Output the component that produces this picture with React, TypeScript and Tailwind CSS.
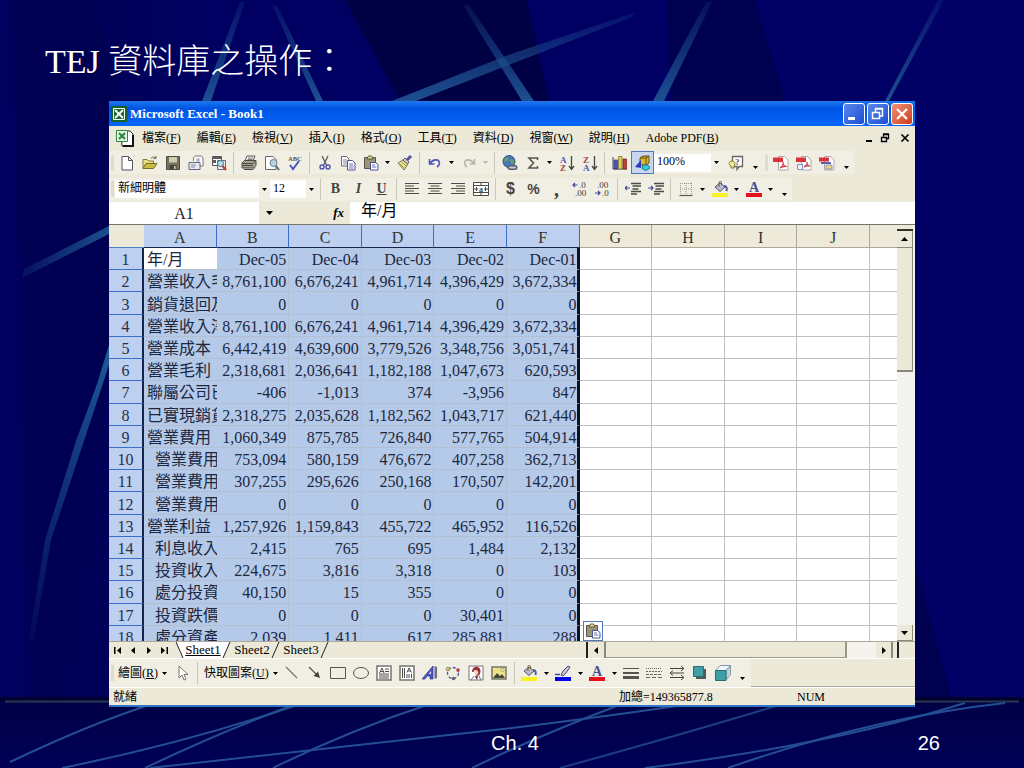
import React from 'react';

type Row = { label: string; indent?: boolean; values: string[] };

const COLUMNS = ['A', 'B', 'C', 'D', 'E', 'F', 'G', 'H', 'I', 'J'];
const SELECTED = 6;

const ROWS: Row[] = [
  { label: '年/月', values: ['Dec-05', 'Dec-04', 'Dec-03', 'Dec-02', 'Dec-01'] },
  { label: '營業收入毛', values: ['8,761,100', '6,676,241', '4,961,714', '4,396,429', '3,672,334'] },
  { label: '銷貨退回及', values: ['0', '0', '0', '0', '0'] },
  { label: '營業收入淨', values: ['8,761,100', '6,676,241', '4,961,714', '4,396,429', '3,672,334'] },
  { label: '營業成本', values: ['6,442,419', '4,639,600', '3,779,526', '3,348,756', '3,051,741'] },
  { label: '營業毛利', values: ['2,318,681', '2,036,641', '1,182,188', '1,047,673', '620,593'] },
  { label: '聯屬公司已', values: ['-406', '-1,013', '374', '-3,956', '847'] },
  { label: '已實現銷貨', values: ['2,318,275', '2,035,628', '1,182,562', '1,043,717', '621,440'] },
  { label: '營業費用', values: ['1,060,349', '875,785', '726,840', '577,765', '504,914'] },
  { label: '營業費用', indent: true, values: ['753,094', '580,159', '476,672', '407,258', '362,713'] },
  { label: '營業費用', indent: true, values: ['307,255', '295,626', '250,168', '170,507', '142,201'] },
  { label: '營業費用', indent: true, values: ['0', '0', '0', '0', '0'] },
  { label: '營業利益', values: ['1,257,926', '1,159,843', '455,722', '465,952', '116,526'] },
  { label: '利息收入', indent: true, values: ['2,415', '765', '695', '1,484', '2,132'] },
  { label: '投資收入', indent: true, values: ['224,675', '3,816', '3,318', '0', '103'] },
  { label: '處分投資', indent: true, values: ['40,150', '15', '355', '0', '0'] },
  { label: '投資跌價', indent: true, values: ['0', '0', '0', '30,401', '0'] },
  { label: '處分資產', indent: true, values: ['2,039', '1,411', '617', '285,881', '288'] },
];

const MENUS = [
  ['檔案', 'F'],
  ['編輯', 'E'],
  ['檢視', 'V'],
  ['插入', 'I'],
  ['格式', 'O'],
  ['工具', 'T'],
  ['資料', 'D'],
  ['視窗', 'W'],
  ['說明', 'H'],
  ['Adobe PDF', 'B'],
];

// 16x16 drawings for the toolbars
const ICONS: Record<string, React.ReactNode> = {
  new: <path d="M3 1.500h6.500l4 4v9.500H3z M9.500 1.500v4h4" fill="#fff" stroke="#55555c" />,
  open: (
    <>
      <path d="M1 13.500V4.500h4l1.500 1.500h5v3" fill="#e9df86" stroke="#86793a" />
      <path d="M1 13.500l3-5h11l-3.500 5z" fill="#c9bb45" stroke="#7a6d28" />
      <path d="M9 3.500c1.500-2 3.500-2 5-.5m0-2v2.500h-2.500" fill="none" stroke="#6b6b5a" />
    </>
  ),
  save: (
    <>
      <path d="M1.500 1.500h13v13h-13z" fill="#77745a" stroke="#4e4c3e" />
      <path d="M4 2h8v5.500H4z" fill="#cfccb4" />
      <path d="M4.500 10h7v4.500h-7z" fill="#45433a" />
      <path d="M9 11h1.500v3H9z" fill="#dddac8" />
    </>
  ),
  permission: (
    <>
      <path d="M5.500 6V2.500l2-1.500h6l1.500 2v8h-3" fill="#fff" stroke="#77777f" />
      <path d="M1 7.500h11v7H1z" fill="#e9e9f2" stroke="#66667a" />
      <path d="M3 10h5M3 12h4" stroke="#8484a8" />
      <circle cx="10" cy="5" r="2" fill="#b5b5cf" />
    </>
  ),
  search: (
    <>
      <path d="M1.500 1.500h9v9h-9z" fill="#fff" stroke="#555" />
      <path d="M1 2h9v2H1z M1 5h4v3H1z" fill="#5f5a62" />
      <path d="M6.500 5.500h8v9h-8z" fill="#ece9f5" stroke="#6a6a80" />
      <circle cx="9.500" cy="8.500" r="3" fill="#b4e0ea" stroke="#3c6d86" />
      <path d="M11.500 11l3.500 4" stroke="#c0392b" strokeWidth="2" />
    </>
  ),
  print: (
    <>
      <path d="M4 6l2-5h8l-2 5z" fill="#fff" stroke="#55554d" />
      <path d="M7 3h5M6.500 4.500h5" stroke="#777" />
      <path d="M1 8l2.500-2.500h11.500v5L12.500 13H1z" fill="#a5a391" stroke="#48473e" />
      <path d="M1.500 8.500H12l2.500-2.500M2 10.500h10M3 14.500h9l2-2" fill="none" stroke="#48473e" />
    </>
  ),
  preview: (
    <>
      <path d="M1.500 1.500h7.500l3 3v10H1.500z" fill="#fff" stroke="#66666d" />
      <circle cx="9.500" cy="8" r="3.500" fill="#b9d4dd" stroke="#6c7f88" />
      <path d="M12 11l3 4" stroke="#5c6b80" strokeWidth="2" />
    </>
  ),
  spell: (
    <>
      <text x="1" y="6" fontSize="6.500" fontWeight="700" fill="#55555c">ABC</text>
      <path d="M3 10l3 4 6-8" fill="none" stroke="#4e55b8" strokeWidth="2" />
    </>
  ),
  cut: (
    <>
      <path d="M5 1l4.500 9M11 1L6.500 10" stroke="#54545e" fill="none" strokeWidth="1.200" />
      <circle cx="5" cy="12" r="2" fill="none" stroke="#4a52b0" strokeWidth="1.400" />
      <circle cx="11" cy="12" r="2" fill="none" stroke="#4a52b0" strokeWidth="1.400" />
    </>
  ),
  copy: (
    <>
      <path d="M1.500 1.500h5l2.500 2.500v7H1.500z" fill="#fff" stroke="#66667a" />
      <path d="M3 5h4M3 7h4M3 9h4" stroke="#8484ab" />
      <path d="M7.500 5.500h5l2.500 2.500v7H7.500z" fill="#fff" stroke="#4e5290" />
      <path d="M9 9h4M9 11h4.500M9 13h4.500" stroke="#6a6eb4" />
    </>
  ),
  paste: (
    <>
      <path d="M1.500 2.500h11v11h-11z" fill="#9a9578" stroke="#57544a" />
      <path d="M4.500 4V2.500l1-1.500h3l1 1.500V4z" fill="#e7dc7a" stroke="#55534a" />
      <path d="M7.500 7.500h5l2.500 2v5.500H7.500z" fill="#fff" stroke="#4e5290" />
      <path d="M9 10h3M9 12h4.500" stroke="#6a6eb4" />
    </>
  ),
  painter: (
    <>
      <path d="M1 8l5-3 5 4-4 6z" fill="#e8e48c" stroke="#77744a" />
      <path d="M3 9l4 4M5 7l4 4" stroke="#9a974f" />
      <path d="M6 5l2-2 4 4-1.500 2z" fill="#c9c9d2" stroke="#65656e" />
      <path d="M10 5l4-4" stroke="#55559a" strokeWidth="3" />
    </>
  ),
  undo: <path d="M2.500 4v5h5M3 8.500C6 4 12 3.500 12.500 8c0 2-1 3-2.500 4" fill="none" stroke="#4e55b8" strokeWidth="1.600" />,
  redo: <path d="M13.500 4v5h-5M13 8.500C10 4 4 3.500 3.500 8c0 2 1 3 2.500 4" fill="none" stroke="#bab8ac" strokeWidth="1.600" />,
  link: (
    <>
      <circle cx="7" cy="6.500" r="6" fill="#4677b8" stroke="#344f86" />
      <path d="M3 3c3-2 4 0 3 2s-3 2-4 1zM8 5c3-1 4 0 4 2s-3 3-3 1z" fill="#63a45c" />
      <path d="M8 12.500h5" stroke="#55606e" strokeWidth="5" strokeLinecap="round" />
      <path d="M8 12.500h5" stroke="#c4c8d0" strokeWidth="2" strokeLinecap="round" />
    </>
  ),
  sum: <path d="M12.500 5V3H4l4.500 5L4 13h8.500v-2" fill="none" stroke="#55554f" strokeWidth="1.600" />,
  sortAsc: (
    <>
      <text x="1" y="7.500" fontSize="9" fontWeight="700" fill="#4e55b8">A</text>
      <text x="1" y="15.500" fontSize="9" fontWeight="700" fill="#a8423f">Z</text>
      <path d="M12.500 1v13M10 11l2.500 3.500L15 11" fill="none" stroke="#484842" strokeWidth="1.300" />
    </>
  ),
  sortDesc: (
    <>
      <text x="1" y="7.500" fontSize="9" fontWeight="700" fill="#a8423f">Z</text>
      <text x="1" y="15.500" fontSize="9" fontWeight="700" fill="#4e55b8">A</text>
      <path d="M12.500 1v13M10 11l2.500 3.500L15 11" fill="none" stroke="#484842" strokeWidth="1.300" />
    </>
  ),
  chart: (
    <>
      <path d="M1 2v12h14" fill="none" stroke="#44443e" />
      <path d="M2 5h3.500v9H2z" fill="#4e55c4" stroke="#2d3274" strokeWidth=".7" />
      <path d="M6.500 1.500H10V14H6.500z" fill="#e9d33e" stroke="#736518" strokeWidth=".7" />
      <path d="M11 4h3.500v10H11z" fill="#c63a35" stroke="#6e1f1c" strokeWidth=".7" />
    </>
  ),
  drawing: (
    <>
      <path d="M5 3l3-2h6v7l-3 2H5z" fill="#d9b92c" stroke="#5e5112" />
      <path d="M5 3h6v7M11 3l3-2" fill="none" stroke="#5e5112" />
      <path d="M0 12L6 5v8z" fill="#2c3bbd" />
      <path d="M8 10h5l2 3-4 2.500-4-2z" fill="#35c9dd" stroke="#1c7d90" />
    </>
  ),
  help: (
    <>
      <path d="M4.500 1.500h10v10H11l-2 3v-3H4.500z" fill="#fff" stroke="#66665e" strokeWidth="1.300" />
      <text x="7" y="9.500" fontSize="9" fontWeight="700" fill="#55554f">?</text>
      <path d="M4 6c3 0 4 3 2 5v2H3v-2C0 9 1 6 4 6z" fill="#ecec94" stroke="#77773c" />
    </>
  ),
  pdf: (
    <>
      <path d="M5.500 1.500h6l3.500 3.500v10H5.500z" fill="#fff" stroke="#a9a9a9" />
      <path d="M0 2.500h10v4.500H0z" fill="#d8333b" />
      <path d="M7 13c3-2 3.500-5 3-6 0 3 2 4.500 4 4.500-3-.5-5 0-7 1.500z" fill="none" stroke="#d8434b" strokeWidth="1.200" />
    </>
  ),
  pdfMail: (
    <>
      <path d="M5.500 1.500h6l3.500 3.500v10H5.500z" fill="#fff" stroke="#a9a9a9" />
      <path d="M0 2.500h10v4.500H0z" fill="#d8333b" />
      <path d="M8 12c3-2 3.500-4 3-5 0 2 1 4 3 4-3 0-4 0-6 1z" fill="none" stroke="#d8434b" strokeWidth="1.200" />
      <path d="M1.500 9.500h5v5h-5z" fill="#eef2fb" stroke="#7a93c8" />
    </>
  ),
  pdfReview: (
    <>
      <path d="M5.500 1.500h6l3.500 3.500v10H5.500z" fill="#fff" stroke="#a9a9a9" />
      <path d="M0 2.500h10v4H0z" fill="#d8333b" />
      <path d="M2 7h10v2H2z" fill="#5a5fb0" />
      <path d="M7 10h6v4H7z" fill="#efd97c" stroke="#8390b8" />
    </>
  ),
  alignLeft: <path d="M1 2.500h14M1 5h9M1 7.500h14M1 10h9M1 12.500h14" stroke="#4c4c46" strokeWidth="1.200" />,
  alignCenter: <path d="M1 2.500h14M3.500 5h9M1 7.500h14M3.500 10h9M1 12.500h14" stroke="#4c4c46" strokeWidth="1.200" />,
  alignRight: <path d="M1 2.500h14M6 5h9M1 7.500h14M6 10h9M1 12.500h14" stroke="#4c4c46" strokeWidth="1.200" />,
  merge: (
    <>
      <path d="M.5 1.500h15v13H.5zM.5 4.500h15M.5 11.500h15M8 1.500v3M8 11.500v3" fill="#fff" stroke="#4c4c46" />
      <path d="M1 8h4M15 8h-4M3.500 6v4M12.500 6v4" stroke="#4c4c46" />
      <text x="6" y="10.500" fontSize="8" fontWeight="700" fill="#4c4c46">a</text>
    </>
  ),
  incDecimal: (
    <>
      <path d="M5.500 4H1M3 2L1 4l2 2" fill="none" stroke="#4048a0" strokeWidth="1.200" />
      <text x="7" y="7" fontSize="9" fill="#3e3e3a">.0</text>
      <text x="3" y="15" fontSize="9" fill="#3e3e3a">.00</text>
    </>
  ),
  decDecimal: (
    <>
      <text x="2" y="7" fontSize="9" fill="#3e3e3a">.00</text>
      <path d="M0 12h5M3 10l2 2-2 2" fill="none" stroke="#4048a0" strokeWidth="1.200" />
      <text x="7" y="15" fontSize="9" fill="#3e3e3a">.0</text>
    </>
  ),
  outdent: (
    <>
      <path d="M6 2.500h10M7.500 5h8.500M7.500 8h6M6 10.500h10M6 13h6" stroke="#4c4c46" strokeWidth="1.300" />
      <path d="M5 7H0M2 5L0 7l2 2" fill="none" stroke="#4048a0" strokeWidth="1.200" />
    </>
  ),
  indent: (
    <>
      <path d="M6 2.500h10M7.500 5h8.500M7.500 8h6M6 10.500h10M6 13h6" stroke="#4c4c46" strokeWidth="1.300" />
      <path d="M0 7h5M3 5l2 2-2 2" fill="none" stroke="#4048a0" strokeWidth="1.200" />
    </>
  ),
  border: (
    <>
      <path d="M2 2.500h12M2 8h12M2.500 2v11M8 2v11M13.500 2v11" stroke="#9c9a8c" strokeDasharray="1 1" />
      <path d="M1.500 14.500h13" stroke="#5a5a52" strokeWidth="1.200" />
    </>
  ),
  fill: (
    <>
      <path d="M3 6l5-4 5 4-5 4.500z" fill="#b9b9cc" stroke="#55556e" />
      <path d="M7 6V1.500C7 0 9.500 0 9.500 1.500V4" fill="none" stroke="#6e5a28" />
      <path d="M12 5c3 0 3 2.500 2.500 5" fill="none" stroke="#4e55a0" strokeWidth="2" />
      <path d="M0 12h16v4H0z" fill="#f8f020" />
    </>
  ),
  lineColor: (
    <>
      <path d="M0 9.500h5" stroke="#4048a0" strokeWidth="1.500" />
      <path d="M6 10l2-4 5-5 2 1-4 6-3 3z" fill="#c6c8da" stroke="#4a4a78" />
      <path d="M0 12h16v4H0z" fill="#0000ee" />
    </>
  ),
  fontColor: (
    <>
      <text x="3" y="10.500" fontSize="14" fontWeight="700" fill="#484f92" fontFamily="Liberation Serif">A</text>
      <path d="M0 12h16v4H0z" fill="#e8101c" />
    </>
  ),
  cursor: <path d="M4 1v12l3-3 2 5 2-1-2-4.500h4z" fill="#fff" stroke="#77776e" />,
  line: <path d="M2 2l11 11" stroke="#77756a" strokeWidth="1.200" />,
  arrow: (
    <>
      <path d="M2 2l9 9" stroke="#55554d" strokeWidth="1.200" />
      <path d="M13 13L6.500 11 11 6.500z" fill="#44443e" />
    </>
  ),
  rect: <path d="M.5 2.500h15v11H.5z" fill="none" stroke="#55554d" />,
  ellipse: <ellipse cx="8" cy="8" rx="7.500" ry="5.500" fill="none" stroke="#55554d" />,
  textBox: (
    <>
      <path d="M1 1h14v14H1z" fill="#fff" stroke="#77756c" strokeWidth="1.500" />
      <path d="M3.500 8L6 3l2 5M4.500 6.500h3M9 4h4M9 6.500h4M3 9h10M3 11h10M3 13h10" fill="none" stroke="#4c4c50" />
    </>
  ),
  verticalText: (
    <>
      <path d="M1 1h14v14H1z" fill="#fff" stroke="#77756c" strokeWidth="1.500" />
      <path d="M3.500 3v10M5.500 3v10M8 13V9M10 13V9M12.500 13V9M8 7.500L10 3l2.500 4.500M9 6h3" fill="none" stroke="#4c4c50" />
    </>
  ),
  wordArt: (
    <>
      <path d="M0 14L11 1v13H8v-3H5l-2 3z" fill="#4b55cf" stroke="#30357e" strokeWidth=".7" />
      <path d="M7 9h2V6z" fill="#f1efe4" />
      <path d="M12.500 1l2.500 1v11l-2.500 1z" fill="#6a6c80" />
    </>
  ),
  diagram: (
    <>
      <circle cx="8" cy="8" r="5.500" fill="none" stroke="#4e55a0" strokeWidth="1.300" strokeDasharray="3 2" />
      <circle cx="3" cy="4" r="1.800" fill="#e6d44d" stroke="#555" strokeWidth=".6" />
      <circle cx="13" cy="5" r="1.800" fill="#a8423f" />
      <circle cx="8.500" cy="13.500" r="1.800" fill="#6b6570" />
    </>
  ),
  clipArt: (
    <>
      <path d="M1 1h14v14H1z" fill="#fff" stroke="#77756c" />
      <path d="M4 7c0-7 9-7 8.500 0l-1 3-2 1-1-2 1-3-3-1-1 2z" fill="#9c3038" />
      <path d="M6.500 5.500l3 0 1 3-2 1.500-2-1z" fill="#f0cdb8" />
      <path d="M8 10l2 1.500-1 3.500-2-3z" fill="#8d3a48" />
      <path d="M3 15l3-4M13 15l-2-4" stroke="#66707e" />
    </>
  ),
  picture: (
    <>
      <path d="M1 2h14v12H1z" fill="#ece486" stroke="#77756c" strokeWidth="1.500" />
      <path d="M2 13l4-5 3 3 2-2 3 4z" fill="#454a3c" />
      <circle cx="11.500" cy="5" r="1.500" fill="#fff" stroke="#77742a" strokeWidth=".6" />
    </>
  ),
  lineStyle: (
    <>
      <path d="M0 3.500h16" stroke="#55554d" />
      <path d="M0 8h16" stroke="#55554d" strokeWidth="2" />
      <path d="M0 12.500h16" stroke="#55554d" strokeWidth="3" />
    </>
  ),
  dashStyle: (
    <>
      <path d="M0 3.500h16" stroke="#66665e" strokeDasharray="1 1" />
      <path d="M0 6.500h16" stroke="#66665e" strokeDasharray="2 1" />
      <path d="M0 9.500h16" stroke="#66665e" strokeDasharray="3 1" />
      <path d="M0 12.500h16" stroke="#66665e" strokeDasharray="4 2" />
    </>
  ),
  arrowStyle: <path d="M1 3.500h13M12 1l3 2.500L12 6M2 8h13M4 5.500L1 8l3 2.500M1 12.500h13M12 10l3 2.500-3 2.500" fill="none" stroke="#44443e" />,
  shadow: (
    <>
      <path d="M4 4h10v10H4z" fill="#4c5c58" />
      <path d="M1.500 1.500h10v10h-10z" fill="#3f9fa4" stroke="#2c6c70" />
    </>
  ),
  cube: (
    <>
      <path d="M.5 5.500L5 .5h10.500L11 5.500z" fill="#eef6fa" stroke="#8296a4" />
      <path d="M11 5.500l4.500-5v9L11 15z" fill="#bcd3df" stroke="#8296a4" />
      <path d="M.5 5.500H11V15.500H.5z" fill="#3f9fa4" stroke="#2c6c70" />
    </>
  ),
};

const Glyph: React.FC<{ name: string }> = ({ name }) => (
  <svg viewBox="0 0 16 16" className="size-4 shrink-0" aria-hidden="true">
    {ICONS[name]}
  </svg>
);

const Caret: React.FC<{ muted?: boolean }> = ({ muted }) => (
  <svg viewBox="0 0 5 3" className="h-[3px] w-[5px]" aria-hidden="true">
    <path d="M0 0h5L2.500 3z" fill={muted ? '#b5b3a6' : '#000'} />
  </svg>
);

const Tool: React.FC<{ label: string; icon?: string; active?: boolean; children?: React.ReactNode }> = ({ label, icon, active, children }) => (
  <button
    type="button"
    aria-label={label}
    className={`flex h-[23px] w-[23px] shrink-0 items-center justify-center text-[#45453f] ${active ? 'border border-[#5078c0] bg-[#c8d6ee]' : ''}`}
  >
    {icon ? <Glyph name={icon} /> : children}
  </button>
);

const Tools: React.FC<{ names: string[] }> = ({ names }) => (
  <>
    {names.map((name) => <Tool key={name} label={name} icon={name} />)}
  </>
);

const Drop: React.FC<{ label: string; muted?: boolean }> = ({ label, muted }) => (
  <button type="button" aria-label={label} className="flex h-[23px] w-[11px] shrink-0 items-center justify-center">
    <Caret muted={muted} />
  </button>
);

const Overflow: React.FC = () => (
  <button type="button" aria-label="more" className="flex h-[23px] w-4 shrink-0 items-end justify-center pb-[5px]">
    <Caret />
  </button>
);

const Sep: React.FC = () => (
  <span className="flex w-[7px] shrink-0 justify-center">
    <span className="h-[22px] w-px bg-[#cbc8b8]" />
  </span>
);

const Grip: React.FC = () => (
  <span className="flex w-[6px] shrink-0 justify-center">
    <span className="h-4 w-[3px] bg-[#dfdccd]" />
  </span>
);

const Combo: React.FC<{ label: string; value: string; className: string }> = ({ label, value, className }) => (
  <span className={`relative flex h-[18px] shrink-0 ${className}`}>
    <select aria-label={label} className="w-full appearance-none bg-white pl-[3px] pb-[3px] text-[12px] leading-[14px] text-black outline-none">
      <option>{value}</option>
    </select>
    <span className="pointer-events-none absolute inset-y-0 right-0 flex w-[11px] items-center justify-center bg-[#f1efe4]">
      <Caret />
    </span>
  </span>
);

const HotKey: React.FC<{ text: string; letter: string }> = ({ text, letter }) => (
  <>
    {text}(<u className="underline-offset-1">{letter}</u>)
  </>
);

const SlideBackground: React.FC = () => (
  <svg viewBox="0 0 1024 768" preserveAspectRatio="none" className="absolute inset-0 h-full w-full" aria-hidden="true">
    <defs>
      <linearGradient id="down" x1="0" y1="0" x2="0" y2="1">
        <stop offset="0" stopColor="#1d4f8f" stopOpacity=".2" />
        <stop offset="1" stopColor="#1d4f8f" />
      </linearGradient>
      <linearGradient id="up" x1="0" y1="1" x2="0" y2="0">
        <stop offset="0" stopColor="#1d4f8f" stopOpacity=".1" />
        <stop offset="1" stopColor="#1d5a98" />
      </linearGradient>
      <linearGradient id="side" x1="0" y1="0" x2="1" y2="0">
        <stop offset="0" stopColor="#1d4f8f" stopOpacity=".2" />
        <stop offset="1" stopColor="#1d4f8f" />
      </linearGradient>
      <linearGradient id="floor" x1="0" y1="0" x2="0" y2="1">
        <stop offset="0" stopColor="#000044" />
        <stop offset="1" stopColor="#000058" />
      </linearGradient>
      <linearGradient id="wall" x1="0" y1="0" x2="1" y2="0">
        <stop offset="0" stopColor="#000060" />
        <stop offset=".08" stopColor="#000056" />
        <stop offset=".2" stopColor="#000062" />
        <stop offset="1" stopColor="#000066" />
      </linearGradient>
    </defs>
    <path d="M0 0h1024v768H0z" fill="url(#wall)" />
    <path d="M12 0h80l30 101v180L60 697H30z" fill="#00004e" opacity=".5" />
    <path d="M345 0h182l22 101H400z" fill="#000044" />
    <path d="M667 0h88l30 101H672z" fill="#000050" />
    <path d="M915 560l36 137h-36z" fill="#000050" />
    <path d="M240 2h5l-34 99h-9z" fill="url(#down)" />
    <path d="M272 5h5l46 96h-7z" fill="url(#down)" />
    <path d="M463 5h6l65 96h-12z" fill="url(#down)" />
    <path d="M636 12l-6 6-214 83h-24l116-46z" fill="url(#down)" />
    <path d="M706 2h6l-48 99h-11z" fill="url(#down)" />
    <path d="M938 0h6l-55 101h-4z" fill="url(#down)" />
    <path d="M22 278l2-9 85-43v8z" fill="url(#side)" />
    <path d="M109 345v20L84 441 51 540 34 640h-5L45 540 76 441 97 384z" fill="url(#up)" />
    <path d="M0 697h1024v71H0z" fill="url(#floor)" />
    <path d="M0 697h1024v4H0z" fill="#00002e" />
    <path d="M5 701.500h1014" stroke="#26394f" strokeWidth="2" />
    <g fill="none" stroke="#234e94" strokeWidth="2">
      <path d="M10 762Q90 724 152 704" />
      <path d="M62 768Q190 742 300 704" />
      <path d="M145 768Q220 732 296 704" />
      <path d="M150 768L512 728Q610 716 690 704" />
      <path d="M273 768Q350 730 430 704" />
      <path d="M472 768Q540 735 622 704" />
      <path d="M560 768Q680 735 776 706" stroke="#1b3c80" />
      <path d="M645 768Q830 745 965 703" />
      <path d="M728 768Q870 718 1005 703" />
    </g>
  </svg>
);

const TitleBar: React.FC = () => (
  <div className="flex h-[25px] items-center bg-linear-to-b from-[#1f78ee] via-[#0054e3] via-30% to-[#0666fa] px-[2px]">
    <svg viewBox="0 0 16 16" className="size-4" aria-hidden="true">
      <path d="M0 0h16v16H0z" fill="#14622a" />
      <path d="M2.500 2.500h11v11h-11z" fill="#1a6b30" stroke="#fff" />
      <path d="M4 4l8 8M12 4l-8 8" stroke="#fff" strokeWidth="1.800" />
    </svg>
    <h2 className="ml-[3px] flex-1 text-[13px] leading-4 font-bold text-white">Microsoft Excel - Book1</h2>
    <div className="flex gap-[2px]">
      <button type="button" aria-label="minimize" className="size-[22px] rounded-[3px] border border-white bg-linear-to-br from-[#5a86ea] to-[#1c4cd4]">
        <svg viewBox="0 0 20 20"><path d="M4 13h7v3H4z" fill="#fff" /></svg>
      </button>
      <button type="button" aria-label="restore" className="size-[22px] rounded-[3px] border border-white bg-linear-to-br from-[#5a86ea] to-[#1c4cd4]">
        <svg viewBox="0 0 20 20">
          <path d="M7.500 8V5h7v7h-3M7 4.500h8M4.500 8.500h7v6h-7zM4 8.500h8" fill="none" stroke="#fff" strokeWidth="1.500" />
        </svg>
      </button>
      <button type="button" aria-label="close" className="size-[22px] rounded-[3px] border border-white bg-linear-to-br from-[#ee9078] to-[#cf3813]">
        <svg viewBox="0 0 20 20"><path d="M5 5l10 10M15 5L5 15" stroke="#fff" strokeWidth="2.200" /></svg>
      </button>
    </div>
  </div>
);

const MenuBar: React.FC = () => (
  <nav className="flex h-[23px] items-center pr-[2px] pl-[7px] text-[12px] leading-4">
    <svg viewBox="0 0 18 18" className="size-[18px]" aria-hidden="true">
      <path d="M5 2h9l3 3v12H6z" fill="#fff" stroke="#222" />
      <path d="M17 6v11H7" fill="none" stroke="#111" strokeWidth="2" />
      <path d="M.5 1.500h11v11H.5z" fill="#e8f4e8" stroke="#2f8a44" />
      <path d="M3 4l6 6M9 4l-6 6" stroke="#1d8a38" strokeWidth="2" />
    </svg>
    <div className="ml-2 flex flex-1 gap-4">
      {MENUS.map(([text, letter]) => (
        <button key={letter} type="button" className="whitespace-nowrap">
          <HotKey text={text} letter={letter} />
        </button>
      ))}
    </div>
    <button type="button" aria-label="minimize workbook" className="w-4">
      <svg viewBox="0 0 16 16"><path d="M5 10h6v2H5z" /></svg>
    </button>
    <button type="button" aria-label="restore workbook" className="mr-1 w-4">
      <svg viewBox="0 0 16 16">
        <path d="M6.500 6.500v-2h5v4h-2M6 4h6M4.500 7.500h5v4h-5zM4 7.500h6" fill="none" stroke="#000" strokeWidth="1.300" />
      </svg>
    </button>
    <button type="button" aria-label="close workbook" className="w-4">
      <svg viewBox="0 0 16 16"><path d="M4.500 4.500l7 7M11.500 4.500l-7 7" stroke="#000" strokeWidth="1.700" /></svg>
    </button>
  </nav>
);

const StandardToolbar: React.FC = () => (
  <div className="flex h-[27px] items-center">
    <div className="flex items-center bg-[#f1efe4]">
      <Grip />
      <Tools names={['new', 'open', 'save', 'permission', 'search']} />
      <Sep />
      <Tools names={['print', 'preview', 'spell']} />
      <Sep />
      <Tools names={['cut', 'copy', 'paste']} />
      <Drop label="paste options" />
      <Tools names={['painter']} />
      <Sep />
      <Tools names={['undo']} />
      <Drop label="undo list" />
      <Tools names={['redo']} />
      <Drop label="redo list" muted />
      <Sep />
      <Tools names={['link', 'sum']} />
      <Drop label="functions" />
      <Tools names={['sortAsc', 'sortDesc']} />
      <Sep />
      <Tools names={['chart']} />
      <Tool label="drawing" icon="drawing" active />
      <Combo label="zoom" value="100%" className="w-[68px]" />
      <span className="w-[2px]" />
      <Tools names={['help']} />
      <Overflow />
      <Grip />
      <Tools names={['pdf', 'pdfMail', 'pdfReview']} />
      <Overflow />
    </div>
  </div>
);

const FormatToolbar: React.FC = () => (
  <div className="flex h-[26px] items-center">
    <div className="flex items-center bg-[#f1efe4]">
      <Grip />
      <Combo label="font" value="新細明體" className="w-[155px]" />
      <Combo label="font size" value="12" className="w-[47px]" />
      <Sep />
      <Tool label="bold"><b className="text-[14px] leading-4">B</b></Tool>
      <Tool label="italic"><i className="text-[14px] leading-4 font-bold">I</i></Tool>
      <Tool label="underline"><u className="text-[14px] leading-4 font-bold">U</u></Tool>
      <Sep />
      <Tools names={['alignLeft', 'alignCenter', 'alignRight', 'merge']} />
      <Sep />
      <Tool label="currency"><span className="font-['Liberation_Sans'] text-[16px] leading-4 font-bold">$</span></Tool>
      <Tool label="percent"><span className="font-['Liberation_Sans'] text-[14px] leading-4 font-bold">%</span></Tool>
      <Tool label="comma"><span className="text-[20px] leading-4 font-bold">,</span></Tool>
      <Tools names={['incDecimal', 'decDecimal']} />
      <Sep />
      <Tools names={['outdent', 'indent']} />
      <Sep />
      <Tools names={['border']} />
      <Drop label="borders" />
      <Tools names={['fill']} />
      <Drop label="fill colors" />
      <Tools names={['fontColor']} />
      <Drop label="font colors" />
      <Overflow />
    </div>
  </div>
);

const FormulaBar: React.FC = () => (
  <div className="flex h-[22px]">
    <input aria-label="name box" defaultValue="A1" className="w-[150px] bg-white pt-[2px] text-center text-[16px] leading-5 text-[#222] outline-none" />
    <button type="button" aria-label="names" className="flex w-5 items-center justify-center">
      <svg viewBox="0 0 7 4" className="h-1 w-[7px]" aria-hidden="true"><path d="M0 0h7L3.500 4z" /></svg>
    </button>
    <button type="button" aria-label="insert function" className="ml-auto w-[71px] pr-[6px] text-right text-[13px] leading-5 font-bold italic">fx</button>
    <input aria-label="formula" defaultValue="年/月" className="min-w-0 flex-[1_1_480px] bg-white pb-[4px] pl-[11px] text-[16px] leading-[18px] outline-none" />
  </div>
);

const Sheet: React.FC = () => (
  <div className="relative h-[417px] overflow-hidden border-t border-[#77756a] bg-white">
    <div className="flex h-full">
      <div className="min-w-0 flex-1">
        <table className="h-[423px] w-full table-fixed border-separate border-spacing-0 text-[16px] leading-[18px]">
          <colgroup>
            <col className="w-[35px]" />
            {COLUMNS.map((c) => <col key={c} />)}
            <col className="w-[27px]" />
          </colgroup>
          <thead>
            <tr className="h-[23px]">
              <td className="border-b border-[#4a7cc8] bg-[#ece9d8] p-0" />
              {COLUMNS.map((c, i) => (
                <th
                  key={c}
                  scope="col"
                  className={`border-r border-b p-0 pt-1 font-normal text-[#333] ${i < SELECTED ? 'border-r-[#3a6fc8] border-b-[#14244c] bg-[#bdd0ef]' : 'border-[#aca899] bg-[#edeada]'}`}
                >
                  {c}
                </th>
              ))}
              <td className="border-b border-[#aca899] bg-[#edeada] p-0" />
            </tr>
          </thead>
          <tbody>
            {ROWS.map((row, r) => (
              <tr key={r}>
                <th scope="row" className="border-r-2 border-b border-r-[#14244c] border-b-[#3a6fc8] bg-[#bdd0ef] p-0 pt-[3px] font-normal text-[#22304e]">
                  {r + 1}
                </th>
                <td className={`overflow-hidden border-b border-[#b4c0d2] p-0 pt-[3px] whitespace-nowrap text-[#1c2840] ${r === 0 ? 'bg-white' : 'bg-[#b5c9e8]'} ${row.indent ? 'pl-[11px]' : 'pl-[3px]'}`}>
                  {row.label}
                </td>
                {row.values.map((value, i) => (
                  <td
                    key={i}
                    className={`overflow-hidden border-b border-b-[#b4c0d2] bg-[#b5c9e8] p-0 pt-[3px] text-right whitespace-nowrap text-[#1c2840] ${i === 4 ? 'border-r-[3px] border-r-[#0c1424]' : 'border-r border-r-[#b4c0d2] pr-[2px]'}`}
                  >
                    {value}
                  </td>
                ))}
                {COLUMNS.slice(SELECTED).map((c) => <td key={c} className="border-r border-b border-[#c0c0c0] p-0" />)}
                <td className="border-b border-[#c0c0c0] p-0" />
              </tr>
            ))}
          </tbody>
        </table>
      </div>
      <div className="flex w-[18px] flex-col bg-[#f4f3ee] pr-[2px]">
        <div className="h-[6px] border-b-2 border-[#33322c] bg-[#ece9d8]" />
        <button type="button" aria-label="scroll up" className="flex h-[17px] items-center justify-center border-r border-b border-[#8a887a] bg-[#ece9d8]">
          <svg viewBox="0 0 7 4" className="h-1 w-[7px]"><path d="M0 4h7L3.500 0z" /></svg>
        </button>
        <div className="h-[124px] border-r border-b-2 border-[#8a887a] bg-[#ece9d8]" />
        <div className="flex-1" />
        <button type="button" aria-label="scroll down" className="flex h-4 items-center justify-center border-r border-b border-[#8a887a] bg-[#ece9d8]">
          <svg viewBox="0 0 7 4" className="h-1 w-[7px]"><path d="M0 0h7L3.500 4z" /></svg>
        </button>
      </div>
    </div>
    <button type="button" aria-label="paste options" className="absolute bottom-0 left-[474px] flex size-5 items-center justify-center border border-[#5078c0] bg-white">
      <Glyph name="paste" />
    </button>
  </div>
);

const NAV = [
  ['first', 'M1 0v7h1.500V0zM8 0v7L4 3.500z'],
  ['previous', 'M6 0v7L2 3.500z'],
  ['next', 'M2 0v7l4-3.500z'],
  ['last', 'M0 0v7l4-3.500zM5.500 0v7H7V0z'],
];

const SheetTabs: React.FC = () => (
  <div className="flex h-[17px] border-t border-[#aca899]">
    {NAV.map(([label, d]) => (
      <button key={label} type="button" aria-label={label} className="flex w-4 items-center justify-center">
        <svg viewBox="0 0 8 7" className="h-[7px] w-2"><path d={d} /></svg>
      </button>
    ))}
    <div className="ml-[3px] flex text-[13px] leading-4">
      {['Sheet1', 'Sheet2', 'Sheet3'].map((name, i) => (
        <button key={name} type="button" className="relative w-[49px] text-center">
          <svg viewBox="0 0 56 16" className="absolute top-0 left-0 h-4 w-14" aria-hidden="true">
            {i === 0 && <path d="M0 0h54l-7 16H7z" fill="#fff" />}
            {i === 0 && <path d="M0 0l7 16" stroke="#222" />}
            <path d="M54 0l-7 16" stroke="#222" />
          </svg>
          <span className={`relative pl-[5px] ${i === 0 ? 'underline' : ''}`}>{name}</span>
        </button>
      ))}
    </div>
    <div className="ml-auto flex w-[335px]">
      <span className="w-[6px]" />
      <span className="w-[2px] bg-[#222]" />
      <button type="button" aria-label="scroll left" className="flex w-[18px] items-center justify-center border-r-2 border-[#8a887a]">
        <svg viewBox="0 0 4 7" className="h-[7px] w-1"><path d="M4 0v7L0 3.500z" /></svg>
      </button>
      <span className="w-[241px] border-r-2 border-b border-[#9a9888]" />
      <span className="flex-1 bg-[#f4f3ee]" />
      <button type="button" aria-label="scroll right" className="flex w-[17px] items-center justify-center border-r-2 border-[#8a887a]">
        <svg viewBox="0 0 4 7" className="h-[7px] w-1"><path d="M0 0v7l4-3.500z" /></svg>
      </button>
      <span className="w-[4px]" />
      <span className="w-[18px] border-l-2 border-[#222]" />
    </div>
  </div>
);

const DrawingToolbar: React.FC = () => (
  <div className="flex h-[29px] items-center border-t border-white text-[12px] leading-4">
    <div className="flex h-full items-center bg-[#f1efe4]">
      <Grip />
      <button type="button" className="flex items-center gap-1 pl-[3px] whitespace-nowrap">
        <span><HotKey text="繪圖" letter="R" /></span>
        <Caret />
      </button>
      <span className="w-1" />
      <Tools names={['cursor']} />
      <Sep />
      <button type="button" className="flex items-center gap-1 px-[3px] whitespace-nowrap">
        <span><HotKey text="快取圖案" letter="U" /></span>
        <Caret />
      </button>
      <Tools names={['line', 'arrow', 'rect', 'ellipse', 'textBox', 'verticalText', 'wordArt', 'diagram', 'clipArt', 'picture']} />
      <Sep />
      <Tools names={['fill']} />
      <Drop label="fill colors" />
      <Tools names={['lineColor']} />
      <Drop label="line colors" />
      <Tools names={['fontColor']} />
      <Drop label="font colors" />
      <Tools names={['lineStyle', 'dashStyle', 'arrowStyle', 'shadow', 'cube']} />
      <Overflow />
    </div>
    <div className="h-full flex-1 border-b border-[#aca899]" />
  </div>
);

const StatusBar: React.FC = () => (
  <div className="flex h-[18px] items-center border-t border-white pl-1 text-[12px] leading-4">
    <span className="flex-1">就緒</span>
    <span className="w-[178px]">加總=149365877.8</span>
    <span className="w-[118px]">NUM</span>
  </div>
);

const App: React.FC = () => {
  return (
    <main className="relative flex min-h-screen flex-col overflow-hidden bg-[#000060] font-['Liberation_Serif','Noto_Sans_CJK_TC',serif]">
      <SlideBackground />
      <h1 className="relative h-[101px] pt-10 pl-[45px] text-[34px] leading-[44px] font-light text-white">TEJ 資料庫之操作：</h1>
      <section className="relative mx-[109px] border-b-2 border-[#2f74c8] bg-[#ece9d8] text-black">
        <TitleBar />
        <MenuBar />
        <StandardToolbar />
        <FormatToolbar />
        <FormulaBar />
        <Sheet />
        <SheetTabs />
        <DrawingToolbar />
        <StatusBar />
      </section>
      <footer className="relative grid flex-1 grid-cols-[1fr_auto_1fr] items-center pt-[10px] pl-[6px] font-['Liberation_Sans',sans-serif] text-[20px] leading-6 text-white">
        <span />
        <span>Ch. 4</span>
        <span className="pr-[84px] text-right">26</span>
      </footer>
    </main>
  );
};

export default App;
